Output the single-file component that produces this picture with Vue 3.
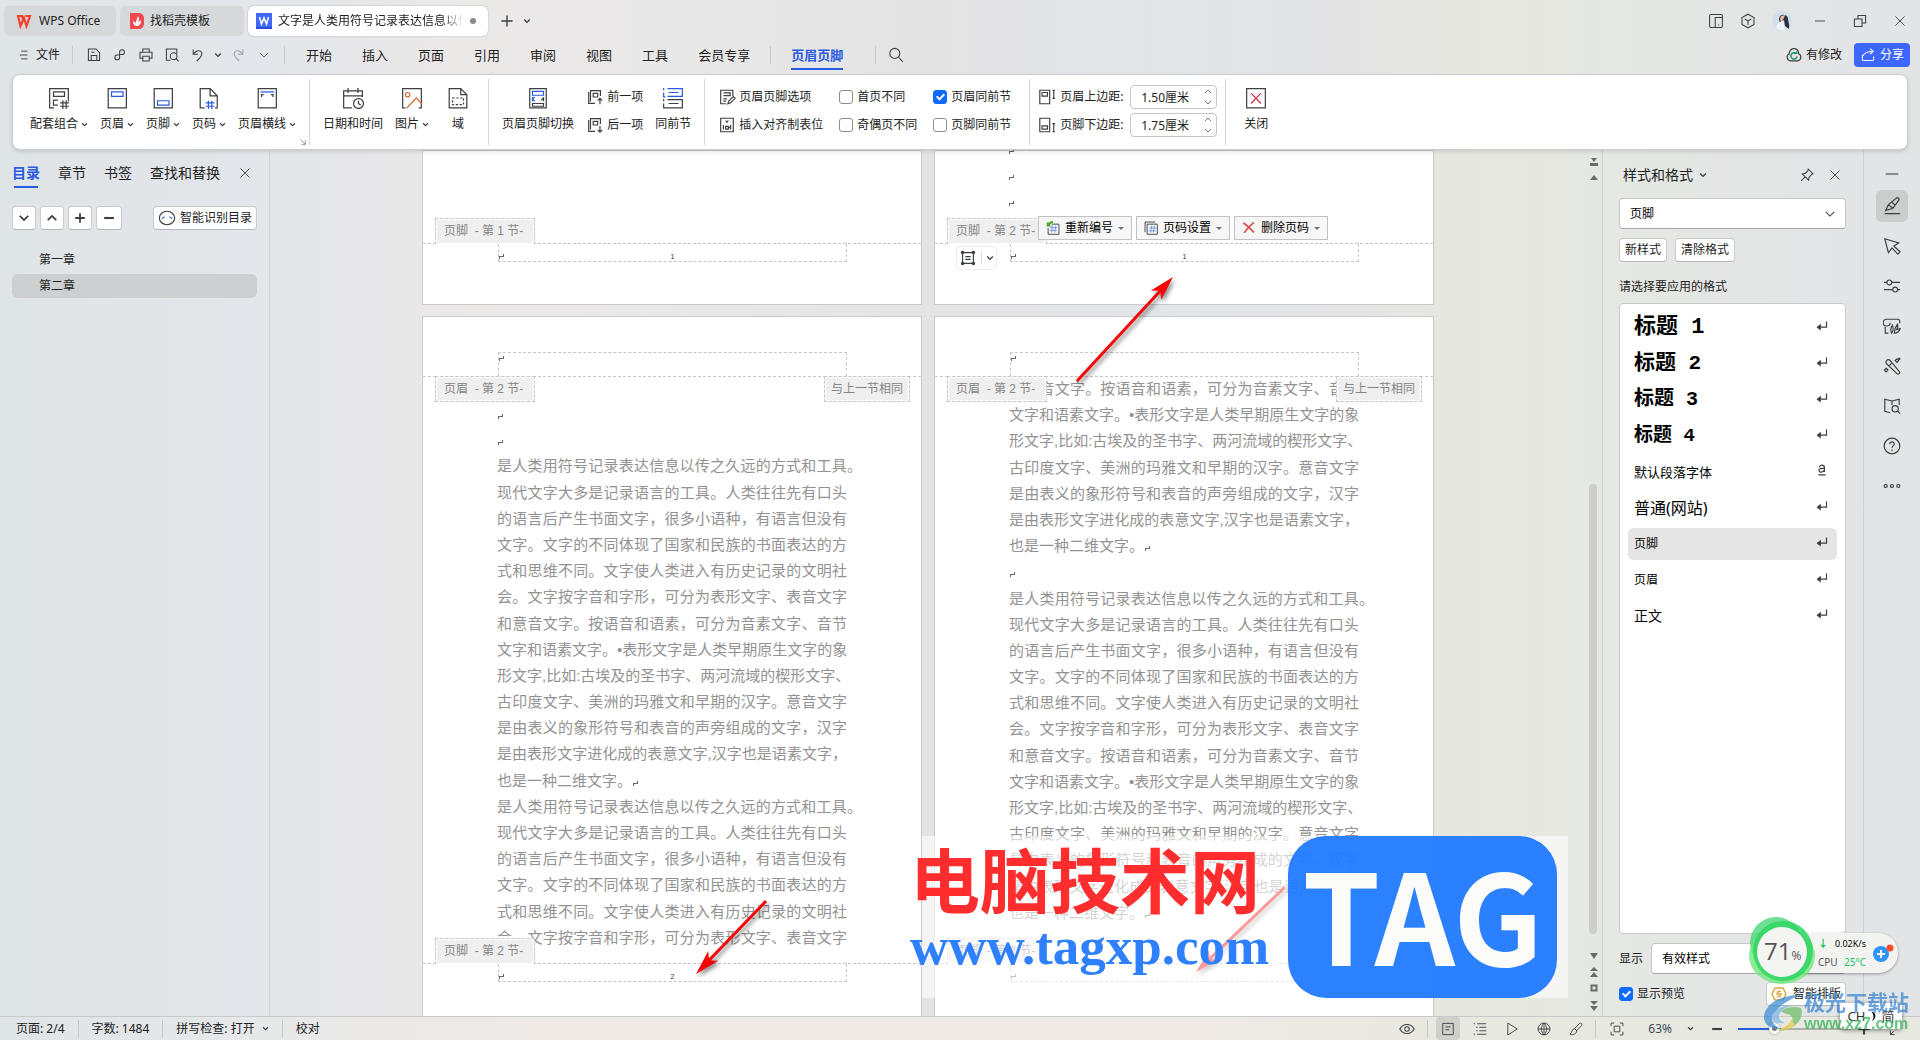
<script setup>
import { ref } from "vue";

const menuTabs = ["开始", "插入", "页面", "引用", "审阅", "视图", "工具", "会员专享"];
const navTabs = ["目录", "章节", "书签", "查找和替换"];
const activeNav = ref("目录");

const chapters = ["第一章", "第二章"];
const activeChapter = ref("第二章");

const headerTools = [
  { label: "配套组合", icon: "combo", more: true },
  { label: "页眉", icon: "header", more: true },
  { label: "页脚", icon: "footer", more: true },
  { label: "页码", icon: "pageNo", more: true },
  { label: "页眉横线", icon: "headerLine", more: true },
];
const insertTools = [
  { label: "日期和时间", icon: "date" },
  { label: "图片", icon: "picture", more: true },
  { label: "域", icon: "field" },
];

const firstDifferent = ref(false);
const oddEvenDifferent = ref(false);
const headerSame = ref(true);
const footerSame = ref(false);
const topMargin = ref("1.50厘米");
const bottomMargin = ref("1.75厘米");
const showPreview = ref(true);
const zoom = ref(30);

const text = [
  "是人类用符号记录表达信息以传之久远的方式和工具。",
  "现代文字大多是记录语言的工具。人类往往先有口头",
  "的语言后产生书面文字，很多小语种，有语言但没有",
  "文字。文字的不同体现了国家和民族的书面表达的方",
  "式和思维不同。文字使人类进入有历史记录的文明社",
  "会。文字按字音和字形，可分为表形文字、表音文字",
  "和意音文字。按语音和语素，可分为音素文字、音节",
  "文字和语素文字。•表形文字是人类早期原生文字的象",
  "形文字,比如:古埃及的圣书字、两河流域的楔形文字、",
  "古印度文字、美洲的玛雅文和早期的汉字。意音文字",
  "是由表义的象形符号和表音的声旁组成的文字，汉字",
  "是由表形文字进化成的表意文字,汉字也是语素文字，",
  "也是一种二维文字。",
];

// An empty string is an empty paragraph: only its mark is drawn.
const pages = [
  { key: "left", lines: ["", "", ...text, ...text.slice(0, 6)] },
  { key: "right", lines: [...text.slice(6), "", ...text] },
];

const hasMark = (line) => line === "" || line === text[12];
const lineClass = (line) => ({ ending: hasMark(line), hanging: line === text[0] });

const pageTools = [
  { label: "重新编号", icon: "renumber" },
  { label: "页码设置", icon: "numberSet" },
  { label: "删除页码", icon: "numberDel" },
];

// start x, start y, tip x, tip y
const pointers = [
  [655, 231, 751, 127],
  [344, 751, 274, 824],
  [863, 737, 774, 822],
];
const pointerLength = (p) => Math.hypot(p[2] - p[0], p[3] - p[1]);
const pointerAngle = (p) => (Math.atan2(p[3] - p[1], p[2] - p[0]) * 180) / Math.PI;

const styles = [
  { name: "标题 1", cls: "h1", mark: "enter" },
  { name: "标题 2", cls: "h2", mark: "enter" },
  { name: "标题 3", cls: "h3", mark: "enter" },
  { name: "标题 4", cls: "h4", mark: "enter" },
  { name: "默认段落字体", cls: "default", mark: "charA" },
  { name: "普通(网站)", cls: "web", mark: "enter" },
  { name: "页脚", cls: "small", mark: "enter" },
  { name: "页眉", cls: "small", mark: "enter" },
  { name: "正文", cls: "body", mark: "enter" },
];
const activeStyle = ref("页脚");

const railIcons = ["pen", "cursor", "sliders", "material", "wand", "book", "help", "dots"];
const viewIcons = ["viewPage", "viewOutline", "play", "globe", "brush"];

// 20x20 glyphs
const icons = {
  menu: '<path d="M6 4.500h9M4 10h11M6 15.500h9"/>',
  save: '<path d="M3 2.500h9.500l4.500 4.500v10H3zM6.500 17v-6.500h7V17M6.500 6.500h4"/>',
  link: '<path d="M9 9.500h3.500a3 3 0 1 0-3-3v6.500a3 3 0 1 1-3-3H9"/>',
  print: '<path d="M6 6.500v-4h8v4M6 14H2.500V6.500h15V14H14M6 11.500h8v6H6z"/>',
  preview: '<path d="M16 8V2.500H3v14h5"/><circle cx="12" cy="11.500" r="4.200"/><path d="M15 14.500l3.500 3.500"/>',
  undo: '<path d="M4 3v6h6M4.500 8.500C8 4 12.500 3.500 14.500 6.500c1.500 2.500 0 5.500-6 11"/>',
  redo: '<path d="M16 3v6h-6M15.500 8.500C12 4 7.500 3.500 5.500 6.500c-1.500 2.500 0 5.500 6 11"/>',
  down: '<path d="M3 6.500l7 7 7-7"/>',
  search: '<circle cx="8.500" cy="8" r="6.300"/><path d="M13 12.500l5.500 6"/>',
  plus: '<path d="M10 2v16M2 10h16"/>',
  minus: '<path d="M3 10h14"/>',
  close: '<path d="M3.500 3.500l13 13M16.500 3.500l-13 13"/>',
  restore: '<path d="M3 7.500h9.500V17H3zM7.500 7V3H17v9.500h-4"/>',
  device: '<rect x="2" y="2" width="16" height="16" rx="1.500"/><path d="M9 18V5.500h8.500M12.500 15h1.500"/>',
  cube: '<path d="M10 1.500l7.500 4.300v8.400L10 18.500l-7.500-4.300V5.800zM6 7.500l4 2.500 4-2.500M10 10v5"/>',
  cloud: '<path d="M7 16.500H6a4 4 0 0 1-1.500-7.500C5 5.500 7 3 10 3s5 2.500 5.500 6a4 4 0 0 1-1.500 7.500H7"/><path stroke="#15935f" stroke-width="1.600" d="M12.500 8.500a3.500 3.500 0 1 0 1 3M10 8h3V6"/>',
  share: '<path d="M3 10v5.500a1.500 1.500 0 0 0 1.500 1.500h11a1.500 1.500 0 0 0 1.500-1.500V12M4 11c1-4 5-5.500 12-5.500M12.500 2l4 3.500-4 3.500"/>',
  combo: '<path d="M5.500 19H1.500V1.500h17V13"/><path d="M5 4.500h10v4H5z"/><path d="M9 12H5v4.500h4M11 14.500h8M11 17.500h8M13.500 12v8M16.500 12v8"/>',
  header: '<path d="M2 1.500h16.500V19H2z"/><path class="blue" d="M5 4.500h10.500v4H5z"/>',
  footer: '<path d="M2 1.500h16.500V19H2z"/><path class="blue" d="M5 12.500h10.500v4H5z"/>',
  pageNo: '<path d="M6 19H2V1.500h9l6.500 6.500v11h-2M11 1.500V8h6.500"/><path class="blue" d="M7 14.500h8M7 17.500h8M9.500 12.500v7.500M12.500 12.500v7.500"/>',
  headerLine: '<path d="M2 1.500h16.500V19H2z"/><path class="blue" d="M4 4.500h12.500"/><path d="M5 9V7h2M15.500 9V7h-2" />',
  date: '<path d="M9 19H1.500V3.500h17V9M1.500 8h17M5.500 1v4.500M14.500 1v4.500"/><circle cx="15" cy="15" r="4.500"/><path d="M15 12.500V15l2 1.500"/>',
  picture: '<path d="M4 19H1.500V1.500h17V19H16"/><circle class="orange" cx="6" cy="7" r="2"/><path class="orange" d="M5 19.500L14 10l5 5.500"/>',
  field: '<path d="M2 19V1.500h10.500L18 7v12zM12.500 1.500V7H18"/><path stroke-dasharray="2 1.500" d="M5 10h10v6H5z"/>',
  swap: '<path d="M2.500 1.500h15V19h-15z"/><path class="blue" d="M5 4h10v3.500H5zM7 9l-2 2 2 2M5 9v4"/><path d="M13 12l2-2v3M5 15h10v2.500H5z"/>',
  prev: '<path d="M3 4.500V17h7M5 15V3h11v6M8 6h5v4H8z" /><path d="M15.500 18v-6M13 14l2.500-2.500L18 14"/>',
  next: '<path d="M3 4.500V17h7M5 15V3h11v6M8 6h5v4H8z" /><path d="M15.500 11v7M13 15.500l2.500 2.500 2.500-2.500"/>',
  same: '<path class="blue" d="M5 1.500h13.500v7H5M1.500 1v2M1.500 5v4h1.500M6 5h9"/><path d="M5 11.500h13.500v7.500H3M1.500 11v2M1.500 15v4h1.500M6 15h9"/>',
  options: '<path d="M9 17.500H3v-15h13.500V9M6 5.500h7.500v3H6M6 12h4M6 14.500h3"/><path d="M11 17.500l1-3 5-5 2 2-5 5z"/>',
  align: '<path d="M3 2.500h14v15H3z"/><path d="M8.500 5l1.500 2 1.500-2M6 10v5M8.500 11.500h3v3h-3zM14 10v5M11.500 13H14"/>',
  marginTop: '<path d="M2 2.500h11v15H2zM4.500 5h6v4h-6z"/><path d="M16 2.500h3M17.500 2.500v9M16 11.500h3"/>',
  marginBottom: '<path d="M2 2.500h11v15H2zM4.500 11h6v3.500h-6z"/><path d="M16 8.500h3M17.500 8.500v9M16 17.500h3"/>',
  closeBox: '<path d="M1.500 1.500h17V19h-17z"/><path stroke="#d2304f" d="M5.500 5.500l9 9.500M14.500 5.500l-9 9.500"/>',
  corner: '<path d="M4 4l11 11M16 6v10H6"/>',
  smart: '<ellipse cx="10" cy="10" rx="8.500" ry="7.500"/><path stroke="#3a6ff0" d="M4.500 11c.5-1.500 1.500-2 3-2M15.500 11c-.5-1.500-1.500-2-3-2"/>',
  pin: '<path d="M11.500 2.500l6 6-2 1-3 3.500-.5 3.500-8-8 3.500-.500 3.500-3zM8 12l-5.500 5.500"/>',
  enter: '<path d="M17.500 2.500v9.500H6"/><path fill="#333" d="M2.500 12L7 8.500v7z"/>',
  charA: '<path d="M5.500 5.500C6 3 8 2 10 2c3 0 4 1.500 4 4v7.500M14 7c-5 0-9 .5-9 3.500C5 14.500 12 14.500 14 10M4 18h12"/>',
  pen: '<path d="M3 15l3-6.500L14.500 1.500a1.800 1.800 0 0 1 2.700 2.500L11 12.500zM6 8.500l5 4M9.500 5.500l4 3.500M2 18.500h17"/>',
  cursor: '<path d="M2 2l15.500 4.500-5.500 3.500 7 6.500-2.500 2.500-6.500-7L6 17.500z"/>',
  sliders: '<circle cx="7" cy="6" r="2.700"/><circle cx="13.500" cy="14" r="2.700"/><path d="M1 6h3.300M9.700 6H19M1 14h9.800M16.200 14H19"/>',
  material: '<path d="M6 18H2.500V11M18.500 7V4.500a2 2 0 0 0-2-2H4A3.500 3.500 0 0 0 4 10c2 0 4-1 4-3.500"/><path d="M9.500 18c-1.500-3-1-6 1-9 1 3 .8 7-1 9zM12.500 18c0-5 2-8 3.500-10 1 3 0 5-1 6l4-1c-1 3-3 5-6.500 5z"/>',
  wand: '<path d="M4 4a2.500 2.500 0 0 1 4 0l10 12a1.700 1.700 0 0 1-2.500 2.500L4 7.500A2.500 2.500 0 0 1 4 4zM7 9.500L10 6.500"/><path d="M15.500 2l2 2-2 2-2-2zM3.500 12.500l2 2-2 2-2-2z"/><circle cx="18" cy="2" r=".8"/>',
  book: '<path d="M10 4.500L2 2.500v13.500l6 1.500M10 4.500l8-2V9M10 4.500V9"/><circle cx="13.500" cy="13" r="3.500"/><path d="M16 15.500l3 3"/>',
  help: '<circle cx="10" cy="10" r="8.700"/><path d="M7.500 8a2.500 2.500 0 1 1 3.500 2.200c-.8.400-1 .8-1 1.800M10 14v1.500"/>',
  dots: '<circle cx="3" cy="10" r="1.700"/><circle cx="10" cy="10" r="1.700"/><circle cx="17" cy="10" r="1.700"/>',
  eye: '<path d="M1 10C5 2.500 15 2.500 19 10 15 17.500 5 17.500 1 10z"/><circle cx="10" cy="10" r="2.800"/>',
  viewPage: '<path d="M2.500 2h15v16h-15zM6.500 7h7M6.500 11h5"/>',
  viewOutline: '<path d="M6 2.500h13M9 7.500h10M9 12.500h10M6 17.500h13M1 2.500h2M4.500 7.500h2M4.500 12.500h2M1 17.500h2"/>',
  play: '<path d="M4 1.500L17.500 10 4 18.500z"/>',
  globe: '<circle cx="10" cy="10" r="8.500"/><path d="M1.500 10h17M10 1.500v17M10 1.500C5 6 5 14 10 18.500M10 1.500c5 4.500 5 12.500 0 17"/>',
  brush: '<path d="M8 9.500l7-7.500c2-1.500 4.500 1 3 3L11 12.500zM8 9.500c-4 0-3 5-6.500 8 4.500 1.500 9 0 9.500-5z"/>',
  fit: '<path d="M1.500 6V1.500H6M14 1.500h4.500V6M18.500 14v4.500H14M6 18.500H1.500V14M6 6h8v8H6z"/>',
  full: '<path d="M12 2h6v6M8 18H2v-6M2 18l5-5M13 2h5"/>',
  layout: '<path d="M4 4h12v12H4zM7 8.500h6M7 11.500h6"/><circle cx="4" cy="4" r="1.300"/><circle cx="16" cy="4" r="1.300"/><circle cx="4" cy="16" r="1.300"/><circle cx="16" cy="16" r="1.300"/>',
  renumber: '<path d="M8 4.500h10.500V19H3V10"/><path class="soft" d="M6 9.500h10M5.500 13.500h10M9.500 6.500l-1.500 10M14 6.500l-1.500 10"/><path fill="#49a824" stroke="none" d="M1 1v7h7L5.500 5.500C7 4 8 3 10 3V0C7 0 4.500 1.500 3 3z"/>',
  numberSet: '<path d="M4.500 4.500H19V19H4.500zM1.500 16V1.500H16"/><path class="soft" d="M7.500 10h10M6.500 14h10M11 6.500l-1.500 10M15 6.500l-1.500 10"/>',
  numberDel: '<path stroke="#d9534f" stroke-width="2.400" d="M2 2.500c5 4 11 9 15 14M17 2C11 7 7 11 3 17"/>',
};
</script>

<template>
  <div class="app">
    <header class="titlebar">
      <button class="doc-tab wps" type="button">
        <svg class="logo" viewBox="0 0 16 14"><path fill="none" stroke="#f4402c" stroke-width="2.200" d="M1 2h5l1.500 5M2 2l2.500 10L8 4l2.500 8L14 2H9.500" /></svg>
        <span>WPS Office</span>
      </button>
      <button class="doc-tab docer" type="button">
        <svg class="logo" viewBox="0 0 16 16"><path fill="#f04a50" d="M1 0h9a5 5 0 0 1 5 5v6a5 5 0 0 1-5 5H1z" /><path fill="#fff" d="M8 13C5 13 4 10.500 4 8l2.500 2L9 3c1.500 2 1 4 0 6l3-2c0 4-1.500 6-4 6z" /></svg>
        <span>找稻壳模板</span>
      </button>
      <button class="doc-tab current" type="button">
        <svg class="logo" viewBox="0 0 16 16"><rect width="16" height="16" rx="1" fill="#3d67ff" /><path fill="#2450d8" d="M0 14h16v2H0z" /><path fill="none" stroke="#fff" stroke-width="1.600" d="M3.500 4l2 7L8 5l2.500 6 2-7" /></svg>
        <span class="doc-name">文字是人类用符号记录表达信息以传</span>
        <i class="dirty"></i>
      </button>
      <button class="plain" type="button" aria-label="新建"><svg class="ic s14 bold" viewBox="0 0 20 20" v-html="icons.plus"></svg></button>
      <button class="plain" type="button" aria-label="标签列表"><svg class="ic s8 bold" viewBox="0 0 20 20" v-html="icons.down"></svg></button>
      <div class="window-tools">
        <svg class="ic s16" viewBox="0 0 20 20" v-html="icons.device"></svg>
        <svg class="ic s16" viewBox="0 0 20 20" v-html="icons.cube"></svg>
        <svg class="avatar" viewBox="0 0 20 20">
          <circle cx="10" cy="10" r="10" fill="#cfdfec" />
          <path fill="#31303a" d="M7 8c0-5 7-6 9-1 0 4 2 7 1 11l-4-3-1-6-3 1-1 2z" />
          <path fill="#e9b9ae" d="M9 5l4-1-1 3-3 4-1-3z" />
          <path fill="#eef3f7" d="M6 12l5-2 2 9c-4 1-8 0-9-3z" />
        </svg>
        <button class="plain" type="button" aria-label="最小化"><svg class="ic s14" viewBox="0 0 20 20" v-html="icons.minus"></svg></button>
        <button class="plain" type="button" aria-label="还原"><svg class="ic s16" viewBox="0 0 20 20" v-html="icons.restore"></svg></button>
        <button class="plain" type="button" aria-label="关闭"><svg class="ic s14" viewBox="0 0 20 20" v-html="icons.close"></svg></button>
      </div>
    </header>

    <nav class="menubar">
      <button class="plain file" type="button"><svg class="ic s14" viewBox="0 0 20 20" v-html="icons.menu"></svg>文件</button>
      <i class="bar"></i>
      <div class="quick">
        <button v-for="name in ['save', 'link', 'print', 'preview', 'undo']" :key="name" class="plain" type="button" :aria-label="name"><svg class="ic s16" viewBox="0 0 20 20" v-html="icons[name]"></svg></button>
        <button class="plain narrow" type="button" aria-label="撤销列表"><svg class="ic s8 bold" viewBox="0 0 20 20" v-html="icons.down"></svg></button>
        <button class="plain faded" type="button" aria-label="redo"><svg class="ic s16" viewBox="0 0 20 20" v-html="icons.redo"></svg></button>
        <button class="plain" type="button" aria-label="更多"><svg class="ic s12" viewBox="0 0 20 20" v-html="icons.down"></svg></button>
      </div>
      <i class="bar"></i>
      <div class="menu-tabs">
        <button v-for="tab in menuTabs" :key="tab" class="plain" type="button">{{ tab }}</button>
      </div>
      <i class="bar"></i>
      <button class="plain menu-active" type="button">页眉页脚</button>
      <i class="bar"></i>
      <button class="plain search" type="button" aria-label="搜索"><svg class="ic s16" viewBox="0 0 20 20" v-html="icons.search"></svg></button>
      <div class="menu-right">
        <button class="plain changed" type="button"><svg class="ic s18" viewBox="0 0 20 20" v-html="icons.cloud"></svg>有修改</button>
        <button class="share" type="button"><svg class="ic s16" viewBox="0 0 20 20" v-html="icons.share"></svg>分享</button>
      </div>
    </nav>

    <section class="ribbon">
      <div class="group first">
        <button v-for="tool in headerTools" :key="tool.label" class="tool" type="button">
          <svg class="ic s22" viewBox="0 0 20 20" v-html="icons[tool.icon]"></svg>
          <span>{{ tool.label }}<svg class="ic s7 bold" viewBox="0 0 20 20" v-html="icons.down"></svg></span>
        </button>
        <svg class="ic s8 launcher" viewBox="0 0 20 20" v-html="icons.corner"></svg>
      </div>
      <div class="group">
        <button v-for="tool in insertTools" :key="tool.label" class="tool" type="button">
          <svg class="ic s22" viewBox="0 0 20 20" v-html="icons[tool.icon]"></svg>
          <span>{{ tool.label }}<svg v-if="tool.more" class="ic s7 bold" viewBox="0 0 20 20" v-html="icons.down"></svg></span>
        </button>
      </div>
      <div class="group">
        <button class="tool" type="button"><svg class="ic s22" viewBox="0 0 20 20" v-html="icons.swap"></svg><span>页眉页脚切换</span></button>
        <div class="stack">
          <button class="line-tool" type="button"><svg class="ic s18" viewBox="0 0 20 20" v-html="icons.prev"></svg>前一项</button>
          <button class="line-tool" type="button"><svg class="ic s18" viewBox="0 0 20 20" v-html="icons.next"></svg>后一项</button>
        </div>
        <button class="tool" type="button"><svg class="ic s22" viewBox="0 0 20 20" v-html="icons.same"></svg><span>同前节</span></button>
      </div>
      <div class="group options">
        <div class="stack">
          <button class="line-tool" type="button"><svg class="ic s18" viewBox="0 0 20 20" v-html="icons.options"></svg>页眉页脚选项</button>
          <button class="line-tool" type="button"><svg class="ic s18" viewBox="0 0 20 20" v-html="icons.align"></svg>插入对齐制表位</button>
        </div>
        <div class="stack">
          <label class="check"><input v-model="firstDifferent" type="checkbox" />首页不同</label>
          <label class="check"><input v-model="oddEvenDifferent" type="checkbox" />奇偶页不同</label>
        </div>
        <div class="stack">
          <label class="check"><input v-model="headerSame" type="checkbox" />页眉同前节</label>
          <label class="check"><input v-model="footerSame" type="checkbox" />页脚同前节</label>
        </div>
      </div>
      <div class="group margins">
        <div class="stack">
          <div class="margin-row">
            <svg class="ic s18" viewBox="0 0 20 20" v-html="icons.marginTop"></svg>
            <label for="top-margin">页眉上边距:</label>
            <span class="spin">
              <input id="top-margin" v-model="topMargin" type="text" />
              <svg class="arrows" viewBox="0 0 8 16"><path d="M1 4l3-3 3 3M1 12l3 3 3-3" /></svg>
            </span>
          </div>
          <div class="margin-row">
            <svg class="ic s18" viewBox="0 0 20 20" v-html="icons.marginBottom"></svg>
            <label for="bottom-margin">页脚下边距:</label>
            <span class="spin">
              <input id="bottom-margin" v-model="bottomMargin" type="text" />
              <svg class="arrows" viewBox="0 0 8 16"><path d="M1 4l3-3 3 3M1 12l3 3 3-3" /></svg>
            </span>
          </div>
        </div>
      </div>
      <div class="group last">
        <button class="tool" type="button"><svg class="ic s22" viewBox="0 0 20 20" v-html="icons.closeBox"></svg><span>关闭</span></button>
      </div>
    </section>

    <main class="workspace">
      <aside class="nav-pane">
        <div class="nav-tabs">
          <button v-for="tab in navTabs" :key="tab" class="plain" :class="{ active: tab === activeNav }" type="button" @click="activeNav = tab">{{ tab }}</button>
          <button class="plain nav-close" type="button" aria-label="关闭"><svg class="ic s14" viewBox="0 0 20 20" v-html="icons.close"></svg></button>
        </div>
        <div class="nav-tools">
          <button class="box" type="button" aria-label="展开"><svg class="ic s12 heavy" viewBox="0 0 20 20" v-html="icons.down"></svg></button>
          <button class="box" type="button" aria-label="收起"><svg class="ic s12 heavy up" viewBox="0 0 20 20" v-html="icons.down"></svg></button>
          <button class="box" type="button" aria-label="提升"><svg class="ic s12 heavy" viewBox="0 0 20 20" v-html="icons.plus"></svg></button>
          <button class="box" type="button" aria-label="降低"><svg class="ic s14 heavy" viewBox="0 0 20 20" v-html="icons.minus"></svg></button>
          <button class="box wide" type="button"><svg class="ic s18" viewBox="0 0 20 20" v-html="icons.smart"></svg>智能识别目录</button>
        </div>
        <ul class="chapters">
          <li v-for="chapter in chapters" :key="chapter" :class="{ active: chapter === activeChapter }" @click="activeChapter = chapter">{{ chapter }}</li>
        </ul>
      </aside>

      <section class="canvas">
        <div class="pages">
          <article class="page">
            <div class="page-body"></div>
            <div class="zone footer-zone">
              <span class="tag above">页脚&nbsp; - 第 1 节-</span>
              <div class="slot"><svg class="mark" viewBox="0 0 5 5"><path d="M4.500 0v2.500H.5V5" /></svg><span>1</span></div>
            </div>
          </article>
          <article class="page">
            <div class="page-body tail">
              <p v-for="n in 3" :key="n"><svg class="mark" viewBox="0 0 5 5"><path d="M4.500 0v2.500H.5V5" /></svg></p>
            </div>
            <div class="zone footer-zone">
              <span class="tag above">页脚&nbsp; - 第 2 节-</span>
              <div class="slot"><svg class="mark" viewBox="0 0 5 5"><path d="M4.500 0v2.500H.5V5" /></svg><span>1</span></div>
              <div class="page-tools">
                <button v-for="tool in pageTools" :key="tool.label" type="button">
                  <svg class="ic s14" viewBox="0 0 20 20" v-html="icons[tool.icon]"></svg>{{ tool.label }}<i class="caret"></i>
                </button>
              </div>
              <button class="layout-btn" type="button" aria-label="布局选项">
                <svg class="ic s18" viewBox="0 0 20 20" v-html="icons.layout"></svg><i></i><svg class="ic s8 bold" viewBox="0 0 20 20" v-html="icons.down"></svg>
              </button>
            </div>
          </article>

          <article v-for="page in pages" :key="page.key" class="page">
            <div class="zone header-zone">
              <span class="tag below">页眉&nbsp; - 第 2 节-</span>
              <span class="tag below same">与上一节相同</span>
              <div class="slot"><svg class="mark" viewBox="0 0 5 5"><path d="M4.500 0v2.500H.5V5" /></svg></div>
            </div>
            <div class="page-body" :class="page.key">
              <div class="lines">
                <p v-for="(line, index) in page.lines" :key="index" :class="lineClass(line)">{{ line }}<svg v-if="hasMark(line)" class="mark" viewBox="0 0 5 5"><path d="M4.500 0v2.500H.5V5" /></svg></p>
              </div>
            </div>
            <div class="zone footer-zone">
              <span class="tag above">页脚&nbsp; - 第 2 节-</span>
              <div class="slot"><svg class="mark" viewBox="0 0 5 5"><path d="M4.500 0v2.500H.5V5" /></svg><span v-if="page.key === 'left'">2</span></div>
            </div>
          </article>

          <svg class="arrows-layer" viewBox="0 0 1012 866" width="1012" height="866">
            <g v-for="(p, i) in pointers" :key="i" :transform="`translate(${p[2]} ${p[3]}) rotate(${pointerAngle(p)})`">
              <path :d="`M${-pointerLength(p)} -1.500L-20 -1.500L-25 -7L0 0L-25 7L-20 1.500L${-pointerLength(p)} 1.500z`" />
            </g>
          </svg>

          <div class="stamp">
            <div class="stamp-text">
              <strong>电脑技术网</strong>
              <em>www.tagxp.com</em>
            </div>
            <div class="stamp-tag">TAG</div>
          </div>
        </div>
        <div class="scroller">
          <svg viewBox="0 0 16 34" class="scroll-top"><path d="M5 8h6l-3 4zM4 13h8v3H4zM4 30h8l-4-5z" /></svg>
          <div class="track"><i></i></div>
          <svg viewBox="0 0 16 66" class="scroll-bottom"><path d="M4 3h8L8 9zM8 17l-4 4h8zM8 22l-4 5h8zM4 51h8l-4 4zM4 56h8l-4 5z" /><path class="hollow" d="M5.500 35.500h5v5h-5z" /></svg>
        </div>
      </section>

      <aside class="style-pane">
        <div class="style-title">
          <h2>样式和格式</h2>
          <svg class="ic s8 bold" viewBox="0 0 20 20" v-html="icons.down"></svg>
          <button class="plain pin" type="button" aria-label="固定"><svg class="ic s16" viewBox="0 0 20 20" v-html="icons.pin"></svg></button>
          <button class="plain" type="button" aria-label="关闭"><svg class="ic s14" viewBox="0 0 20 20" v-html="icons.close"></svg></button>
        </div>
        <div class="drop">
          <select v-model="activeStyle" aria-label="样式"><option v-for="s in styles" :key="s.name">{{ s.name }}</option></select>
          <svg class="ic s12" viewBox="0 0 20 20" v-html="icons.down"></svg>
        </div>
        <div class="style-actions">
          <button class="box" type="button">新样式</button>
          <button class="box" type="button">清除格式</button>
        </div>
        <p class="hint">请选择要应用的格式</p>
        <ul class="style-list">
          <li v-for="s in styles" :key="s.name" :class="{ active: s.name === activeStyle }" @click="activeStyle = s.name">
            <span :class="s.cls">{{ s.name }}</span>
            <svg class="ic s12" viewBox="0 0 20 20" v-html="icons[s.mark]"></svg>
          </li>
        </ul>
        <div class="show-row">
          <label for="show-kind">显示</label>
          <div class="drop"><select id="show-kind"><option>有效样式</option><option>所有样式</option></select></div>
        </div>
        <div class="preview-row">
          <label class="check"><input v-model="showPreview" type="checkbox" />显示预览</label>
          <button class="box smart-layout" type="button">
            <svg viewBox="0 0 16 16"><path fill="none" stroke="#e0a83c" stroke-width="1.500" d="M4 2h8l3 6-3 6H4L1 8zM10 5.500H7L6 8h4l-1 2.500H6" /></svg>智能排版
          </button>
        </div>
      </aside>

      <aside class="rail">
        <svg class="ic s18 rail-min" viewBox="0 0 20 20" v-html="icons.minus"></svg>
        <button v-for="(name, i) in railIcons" :key="name" class="plain" :class="{ active: i === 0 }" type="button" :aria-label="name">
          <svg class="ic s18" viewBox="0 0 20 20" v-html="icons[name]"></svg>
        </button>
      </aside>
    </main>

    <footer class="status">
      <span>页面: 2/4</span><i class="bar"></i>
      <span>字数: 1484</span><i class="bar"></i>
      <span class="spell">拼写检查: 打开<svg class="ic s7 bold" viewBox="0 0 20 20" v-html="icons.down"></svg></span><i class="bar"></i>
      <span>校对</span>
      <div class="status-right">
        <svg class="ic s16 eye" viewBox="0 0 20 20" v-html="icons.eye"></svg><i class="bar"></i>
        <div class="views">
          <button v-for="(name, i) in viewIcons" :key="name" class="plain" :class="{ active: i === 0 }" type="button" :aria-label="name">
            <svg class="ic s14" viewBox="0 0 20 20" v-html="icons[name]"></svg>
          </button>
        </div>
        <i class="bar"></i>
        <svg class="ic s14 fit" viewBox="0 0 20 20" v-html="icons.fit"></svg>
        <span class="percent">63%</span>
        <svg class="ic s7 bold" viewBox="0 0 20 20" v-html="icons.down"></svg>
        <svg class="ic s14 heavy zoom-out" viewBox="0 0 20 20" v-html="icons.minus"></svg>
        <input v-model="zoom" class="zoom" type="range" min="0" max="100" aria-label="缩放" />
        <svg class="ic s14 heavy" viewBox="0 0 20 20" v-html="icons.plus"></svg>
        <svg class="ic s14 full" viewBox="0 0 20 20" v-html="icons.full"></svg>
      </div>
    </footer>

    <div class="monitor">
      <svg class="blob" viewBox="0 0 68 68">
        <circle cx="28" cy="27" r="26" fill="#3fd66f" opacity=".75" />
        <ellipse cx="34" cy="40" rx="33" ry="28" fill="#6fe87c" opacity=".8" />
        <circle cx="35" cy="35" r="30" fill="#2fd562" opacity=".85" />
        <circle cx="34" cy="36" r="25" fill="#f4f4f3" />
      </svg>
      <div class="load">71<small>%</small></div>
      <div class="rates">
        <div><b>↓</b><span>0.02K/s</span></div>
        <div>CPU <em>25°C</em></div>
      </div>
      <svg class="boost" viewBox="0 0 22 20"><circle cx="9" cy="11" r="8" fill="#2f95f7" /><path stroke="#fff" stroke-width="2" d="M9 7v8M5 11h8" /><circle cx="18" cy="5" r="3.500" fill="#f9502f" /></svg>
    </div>

    <div class="ime">CH<svg viewBox="0 0 12 14"><path d="M4 1c6 1 7 9 0 12 3-3 4-8 0-12z" /></svg>简</div>

    <div class="site">
      <svg viewBox="0 0 44 40">
        <path fill="#3f8fd6" d="M42 1C24 0 6 8 4 22c-1 9 8 14 18 13-9-3-12-8-8-15C19 11 30 5 42 1z" />
        <path fill="#7db8e6" d="M12 21C18 13 26 10 34 12c-8 0-13 4-15 9-1 4 2 6 6 8-8 1-15-2-13-8z" />
        <path fill="#6fbf6a" d="M41 14c4 12-8 23-24 23 10-2 18-8 15-14-2-4-9-3-11-6 5-4 14-5 20-3z" />
        <path fill="#e5c94f" d="M31 25c0 5-8 10-16 11 7 1 15 0 20-5z" />
      </svg>
      <div><strong>极光下载站</strong><span>www.xz7.com</span></div>
    </div>
  </div>
</template>

<style>
body {
  margin: 0;
  overflow: hidden;
}
</style>

<style scoped>
.app {
  position: relative;
  display: flex;
  flex-direction: column;
  height: 100vh;
  overflow: hidden;
  color: #222;
  font: 12px/18px "Noto Sans", "Noto Sans CJK SC", sans-serif;
  background: linear-gradient(90deg, #dfe4e7 0, #e3e6ea 14%, #ebe8e8 24%, #e9e8e8 36%, #e5e4e5 48%, #e2e5e9 62%, #e4e4e5 70%, #e7e8df 78%, #e5e8e3 84%, #e4e5e5 91%, #e3e4e6 100%);
}

button,
input,
select {
  font: inherit;
  color: inherit;
}

.plain {
  display: flex;
  align-items: center;
  justify-content: center;
  padding: 0;
  border: 0;
  background: none;
}

.ic {
  flex: none;
  fill: none;
  stroke: #3c3f43;
  stroke-width: 1.3;
}

.ic :deep(.blue) { stroke: #2a5ae0; }
.ic :deep(.orange) { stroke: #dc6a2c; }
.ic :deep(.soft) { stroke: #6f95e8; }
.ic.bold { stroke-width: 3.4; }
.ic.heavy { stroke-width: 3; }
.s7 { width: 7px; height: 7px; }
.s8 { width: 8px; height: 8px; }
.s12 { width: 12px; height: 12px; }
.s14 { width: 14px; height: 14px; }
.s16 { width: 16px; height: 16px; }
.s18 { width: 18px; height: 18px; }
.s22 { width: 22px; height: 22px; }
.ic.s22 { stroke-width: 1.1; }
.ic.s14.bold { stroke-width: 2; }
.up { rotate: 180deg; }

.bar {
  width: 1px;
  height: 18px;
  background: #c6c8cb;
}

/* title bar */
.titlebar {
  display: flex;
  align-items: center;
  flex: none;
  height: 36px;
  padding: 6px 8px 0 4px;
  box-sizing: border-box;
  gap: 4px;
}

.doc-tab {
  display: flex;
  align-items: center;
  gap: 8px;
  box-sizing: border-box;
  height: 30px;
  padding: 0 9px;
  border: 0;
  border-radius: 6px;
  background: #d6d8da;
}

.logo {
  flex: none;
  width: 16px;
  height: 16px;
}

.wps { width: 112px; padding-left: 12px; gap: 7px; white-space: nowrap; }
.docer { width: 124px; gap: 5px; }
.current {
  width: 240px;
  padding: 0 12px 0 8px;
  gap: 6px;
  background: #fff;
  box-shadow: 0 0 2px rgba(0, 0, 0, 0.25);
}

.doc-name {
  width: 186px;
  overflow: hidden;
  white-space: nowrap;
  text-align: left;
  mask-image: linear-gradient(90deg, #000 88%, transparent 100%);
}

.dirty {
  width: 6px;
  height: 6px;
  margin-left: auto;
  border-radius: 50%;
  background: #8c8c8c;
}

.titlebar > .plain { margin-left: 8px; }
.titlebar > .plain + .plain { margin-left: 5px; }

.window-tools {
  display: flex;
  align-items: center;
  gap: 16px;
  margin-left: auto;
}

.window-tools .plain { width: 24px; }
.avatar { width: 20px; height: 20px; }

/* menu bar */
.menubar {
  display: flex;
  align-items: center;
  flex: none;
  height: 38px;
  padding: 0 10px 0 17px;
}

.file { gap: 5px; margin-right: 12px; }
.quick { display: flex; align-items: center; margin: 0 7px 0 8px; }
.quick .plain { width: 26px; height: 24px; }
.quick .narrow { width: 14px; }
.faded { opacity: 0.4; }
.menu-tabs { display: flex; gap: 30px; margin: 0 20px 0 21px; }
.menu-tabs .plain, .menu-active { height: 30px; font-size: 13px; }
.menu-active {
  position: relative;
  margin: 0 32px 0 20px;
  color: #2a5ae0;
  font-weight: bold;
}

.menu-active::after {
  content: "";
  position: absolute;
  left: 0;
  right: 0;
  bottom: 0;
  height: 2px;
  background: #2a5ae0;
}

.search { margin-left: 12px; }
.menu-right { display: flex; align-items: center; gap: 12px; margin-left: auto; }
.changed { gap: 3px; }
.share {
  display: flex;
  align-items: center;
  gap: 4px;
  height: 24px;
  padding: 0 6px;
  border: 0;
  border-radius: 4px;
  color: #fff;
  background: #3d67ff;
}

.share .ic { stroke: #fff; }

/* ribbon */
.ribbon {
  position: relative;
  z-index: 2;
  display: flex;
  flex: none;
  height: 76px;
  margin: 0 12px 0 12px;
  box-sizing: border-box;
  border: 1px solid #cccdce;
  border-radius: 8px;
  background: #fff;
  box-shadow: 0 2px 4px rgba(0, 0, 0, 0.12);
  white-space: nowrap;
}

.group {
  position: relative;
  display: flex;
  gap: 12px;
  margin: 4px 0;
  padding: 6px 13px 0;
  border-right: 1px solid #d4d5d6;
}

.group.first { padding-left: 17px; }
.group.options { gap: 16px; padding-right: 18px; }
.group.margins { padding: 6px 8px 0; }
.group.last { padding: 6px 18px 0; border: 0; }

.tool {
  display: flex;
  flex-direction: column;
  align-items: center;
  gap: 6px;
  height: 52px;
  min-width: 24px;
  padding: 2px 0 0;
  border: 0;
  background: none;
}

.group:nth-child(2) .tool { min-width: 34px; }
.tool span { display: flex; align-items: center; gap: 3px; }

.launcher {
  position: absolute;
  right: 2px;
  bottom: -1px;
}

.stack { display: flex; flex-direction: column; gap: 4px; }

.line-tool {
  display: flex;
  align-items: center;
  gap: 3px;
  height: 24px;
  padding: 0;
  border: 0;
  background: none;
}

.check {
  display: flex;
  align-items: center;
  gap: 4px;
  height: 24px;
}

.check input {
  appearance: none;
  width: 14px;
  height: 14px;
  margin: 0;
  border: 1px solid #8c8e90;
  border-radius: 3px;
  background: #fff;
}

.check input:checked {
  position: relative;
  border-color: #0f6bff;
  background: #0f6bff;
}

.check input:checked::after {
  content: "";
  position: absolute;
  left: 4px;
  top: 1px;
  width: 3px;
  height: 6px;
  border: solid #fff;
  border-width: 0 2px 2px 0;
  rotate: 45deg;
}

.margin-row { display: flex; align-items: center; gap: 4px; height: 24px; }
.margin-row label { width: 66px; }
.spin { position: relative; display: flex; }
.spin input {
  box-sizing: border-box;
  width: 87px;
  height: 24px;
  padding: 0 0 0 10px;
  border: 1px solid #c4c6c8;
  border-radius: 4px;
  background: #fff;
}

.arrows {
  position: absolute;
  right: 5px;
  top: 4px;
  width: 8px;
  height: 16px;
  fill: none;
  stroke: #777;
}

/* workspace */
.workspace {
  display: flex;
  flex: 1;
  min-height: 0;
}

.nav-pane {
  flex: none;
  width: 270px;
  padding: 12px 12px 0;
  box-sizing: border-box;
  border-right: 1px solid #d0d2d4;
}

.nav-tabs { display: flex; gap: 18px; height: 26px; font-size: 14px; }
.nav-tabs .plain { position: relative; height: 22px; }
.nav-tabs .active { color: #2a5ae0; font-weight: bold; }
.nav-tabs .active::after {
  content: "";
  position: absolute;
  left: 2px;
  right: 2px;
  bottom: -4px;
  height: 2px;
  background: #2a5ae0;
}

.nav-close { margin: 0 5px 0 auto; }

.nav-tools { display: flex; gap: 4px; margin-top: 18px; }

.box {
  display: flex;
  align-items: center;
  justify-content: center;
  gap: 4px;
  box-sizing: border-box;
  height: 24px;
  min-width: 24px;
  padding: 0 5px;
  border: 1px solid #c9cbcc;
  border-bottom-color: #b4b6b7;
  border-radius: 4px;
  background: #fff;
  white-space: nowrap;
}

.wide { margin-left: auto; padding: 0 4px; }

.chapters { margin: 18px 0 0; padding: 0; list-style: none; }
.chapters li {
  height: 24px;
  margin-bottom: 2px;
  padding-left: 27px;
  border-radius: 6px;
  line-height: 24px;
}

.chapters .active { background: #cdcfd1; }

/* document */
.canvas {
  display: flex;
  flex: 1;
  min-width: 0;
  overflow: hidden;
}

.pages {
  position: relative;
  display: grid;
  grid-template-columns: 500px 500px;
  grid-template-rows: 155px 1fr;
  gap: 11px 12px;
  margin: 0 auto;
}

.page {
  position: relative;
  display: flex;
  flex-direction: column;
  min-height: 0;
  box-sizing: border-box;
  border: 1px solid #cbcbcb;
  background: #fff;
}

.page:nth-child(n + 3) { border-bottom: 0; }
.page-body { flex: 1; min-height: 0; padding: 0 74px; }
.page-body.left { padding-top: 25px; }
.page-body p { margin: 0; }
.tail { display: flex; flex-direction: column; justify-content: flex-end; padding-bottom: 28px; }
.tail p { height: 26px; line-height: 26px; }

/* the line pitch comes from dividing the text block evenly */
.lines {
  display: flex;
  flex-direction: column;
  justify-content: space-between;
  height: 548px;
  color: #929292;
  font: 15px/24px "Liberation Sans", "Noto Sans CJK SC", sans-serif;
}

.lines p {
  height: 24px;
  text-align-last: justify;
  white-space: nowrap;
}

.lines .ending { text-align-last: left; }
.lines .hanging { margin-right: -15px; }
.lines .mark { margin-left: 1px; }

.mark {
  width: 5px;
  height: 5px;
  fill: none;
  stroke: #666;
  shape-rendering: crispEdges;
}

.zone { position: relative; flex: none; }
.header-zone { height: 60px; box-sizing: border-box; padding: 35px 74px 0 75px; border-bottom: 1px dashed #c6c6c6; }
.footer-zone { height: 53px; box-sizing: border-box; padding: 0 74px 0 75px; border-top: 1px dashed #c6c6c6; }
.page:nth-child(-n + 2) .footer-zone { height: 61px; }

.slot {
  display: flex;
  align-items: flex-end;
  height: 18px;
  box-sizing: border-box;
  border: 1px dashed #c6c6c6;
}

.header-zone .slot { height: 24px; padding-top: 3px; border-bottom: 0; align-items: flex-start; }
.footer-zone .slot { border-top: 0; }
.slot .mark { margin: 0 -5px 2px 0; }
.slot span { margin: 0 auto; color: #333; font: 7px/9px "Liberation Sans", sans-serif; }

.tag {
  position: absolute;
  left: 12px;
  z-index: 1;
  box-sizing: border-box;
  height: 26px;
  min-width: 100px;
  padding: 0 8px;
  border: 1px dashed #c6c6c6;
  background: #efefef;
  box-shadow: inset 0 0 0 1px #fff;
  color: #858585;
  font-family: "Liberation Sans", "Noto Sans CJK SC", sans-serif;
  line-height: 24px;
  white-space: nowrap;
}

.above { bottom: 100%; border-bottom: 0; }
.below { top: 59px; }
.same { left: auto; right: 11px; min-width: 86px; padding: 0 6px; }

.page-tools {
  position: absolute;
  left: 103px;
  top: -28px;
  z-index: 2;
  display: flex;
  gap: 4px;
}

.page-tools button {
  display: flex;
  align-items: center;
  box-sizing: border-box;
  width: 94px;
  height: 24px;
  padding: 0 7px;
  gap: 5px;
  border: 1px solid #c2c2c2;
  background: #f6f6f6;
  color: #000;
  white-space: nowrap;
}

.caret {
  border: 3px solid transparent;
  border-top-color: #6b7280;
  border-bottom: 0;
}

.layout-btn {
  position: absolute;
  left: 21px;
  top: 2px;
  display: flex;
  align-items: center;
  gap: 4px;
  height: 24px;
  padding: 0 2px;
  border: 1px solid #ececec;
  border-radius: 4px;
  background: #fff;
}

.layout-btn i { width: 1px; height: 14px; background: #ddd; }

.arrows-layer {
  position: absolute;
  left: 0;
  top: 0;
  z-index: 3;
  fill: #f60606;
  filter: drop-shadow(2px 3px 2px rgba(0, 0, 0, 0.45));
  pointer-events: none;
}

.stamp {
  position: absolute;
  left: 500px;
  top: 686px;
  z-index: 4;
  display: flex;
  justify-content: flex-end;
  width: 646px;
  height: 162px;
  background: rgba(255, 255, 255, 0.6);
}

.stamp-text {
  position: absolute;
  left: -12px;
  top: 4px;
  display: flex;
  flex-direction: column;
}

.stamp-text strong {
  color: #ff2d2d;
  font: bold 70px/76px "Noto Sans CJK SC", sans-serif;
}

.stamp-text em {
  color: #2f80ff;
  font: normal bold 53px/60px "Liberation Serif", serif;
}

.stamp-tag {
  width: 269px;
  margin-right: 11px;
  border-radius: 38px;
  background: rgba(20, 115, 255, 0.9);
  color: #fbfbfa;
  font: bold 125px/152px "Noto Sans CJK SC", sans-serif;
  text-align: center;
}

.scroller {
  display: flex;
  flex-direction: column;
  flex: none;
  width: 16px;
  fill: #6b6b6b;
}

.scroll-top { width: 16px; height: 34px; }
.scroll-bottom { width: 16px; height: 66px; }
.hollow { fill: none; stroke: #6b6b6b; stroke-width: 2; }
.track { display: flex; flex-direction: column; justify-content: flex-end; flex: 1; padding-bottom: 16px; }
.track i { width: 8px; height: 60%; margin-left: 3px; border-radius: 4px; background: #cdcecd; }

/* style pane */
.style-pane {
  display: flex;
  flex-direction: column;
  flex: none;
  width: 262px;
  padding: 14px 17px 0 16px;
  box-sizing: border-box;
  border-left: 1px solid #cfd1d2;
  border-right: 1px solid #cfd1d2;
}

.style-title { display: flex; align-items: center; height: 22px; padding: 0 4px; }
.style-title h2 { margin: 0 6px 0 0; font-size: 14px; font-weight: normal; }
.pin { margin: 0 13px 0 auto; }

.drop {
  position: relative;
  display: flex;
  align-items: center;
  margin-top: 12px;
}

.drop select {
  appearance: none;
  width: 100%;
  height: 31px;
  padding: 0 10px;
  border: 1px solid #c6c8c9;
  border-bottom-color: #a5a7a8;
  border-radius: 4px;
  background: #fff;
  color: #000;
}

.drop .ic { position: absolute; right: 10px; stroke-width: 1.8; }
.style-actions { display: flex; gap: 8px; margin-top: 9px; }
.hint { margin: 16px 0 7px; }

.style-list {
  flex: 1;
  margin: 0;
  padding: 8px;
  border: 1px solid #c9cacb;
  border-radius: 4px;
  background: #fff;
  list-style: none;
}

.style-list li {
  display: flex;
  align-items: center;
  justify-content: space-between;
  height: 32px;
  margin-bottom: 4px;
  padding: 0 9px 0 6px;
  border-radius: 6px;
  color: #000;
}

.style-list .active { background: #e5e5e5; }
.style-list .ic { margin-bottom: 4px; stroke-width: 2; }
.h1, .h2, .h3, .h4 { font-family: "Liberation Mono", "Noto Sans CJK SC", monospace; font-weight: bold; }
.h1 { font-size: 22px; }
.h2 { font-size: 21px; }
.h3 { font-size: 20px; }
.h4 { font-size: 19px; }
.default { font-size: 13px; }
.web { font-size: 16px; }
.body { font-size: 14px; }

.show-row { display: flex; align-items: center; gap: 8px; margin-top: 9px; }
.show-row .drop { flex: 1; margin: 0; }
.preview-row { display: flex; align-items: center; justify-content: space-between; height: 24px; margin: 8px 0 10px; }
.smart-layout svg { width: 16px; height: 16px; }
.smart-layout { gap: 6px; padding: 0 4px; }

.rail {
  display: flex;
  flex-direction: column;
  align-items: center;
  flex: none;
  width: 56px;
  padding-top: 15px;
  box-sizing: border-box;
}

.rail-min { margin-bottom: 7px; }
.ic.rail-min { stroke: #8c8c8c; stroke-width: 2.4; }
.rail .plain { width: 32px; height: 32px; margin-bottom: 8px; border-radius: 6px; }
.rail .active { background: #cbcdcd; }

/* status bar */
.status {
  display: flex;
  align-items: center;
  gap: 13px;
  flex: none;
  height: 24px;
  padding: 0 17px 0 16px;
  box-sizing: border-box;
  border-top: 1px solid #c8c9c9;
  background: linear-gradient(90deg, #dfe4e7 0, #e6e8e9 12%, #efeae6 28%, #efeae6 63%, #e7e8df 76%, #e7e8df 100%);
}

.spell { display: flex; align-items: center; gap: 7px; }
.status-right { display: flex; align-items: center; margin-left: auto; }
.eye { margin-right: 12px; }
.views { display: flex; gap: 8px; margin: 0 7px 0 8px; }
.views .plain { width: 24px; height: 23px; border-radius: 4px; }
.views .active { background: #cfd0cb; }
.fit { margin: 0 24px 0 14px; }
.percent { margin-right: 15px; color: #444c5c; }
.zoom-out { margin: 0 14px 0 16px; }

.zoom {
  appearance: none;
  width: 113px;
  height: 12px;
  margin: 0 6px 0 0;
  background: linear-gradient(90deg, #2a5ae0 30%, #aeb0ab 30%) center / 100% 2px no-repeat;
}

.zoom::-webkit-slider-thumb {
  appearance: none;
  width: 11px;
  height: 11px;
  border: 3px solid #fff;
  border-radius: 50%;
  background: #777;
  box-shadow: 0 0 2px rgba(0, 0, 0, 0.5);
}

.full { margin-left: 18px; }

/* floating widgets */
.monitor {
  position: absolute;
  right: 22px;
  bottom: 67px;
  z-index: 5;
  display: flex;
  align-items: center;
  gap: 6px;
  box-sizing: border-box;
  width: 120px;
  height: 40px;
  padding: 0 4px 0 40px;
  border-radius: 20px;
  background: #f3f3f2;
  box-shadow: 0 1px 3px rgba(0, 0, 0, 0.35);
}

.blob { position: absolute; left: -30px; top: -17px; width: 68px; height: 68px; }
.load {
  position: absolute;
  left: -14px;
  top: 3px;
  color: #555;
  font: 24px/30px "Open Sans", sans-serif;
}

.load small { font-size: 12px; }
.rates { width: 48px; color: #555; font-size: 10px; line-height: 18px; white-space: nowrap; }
.rates div { display: flex; justify-content: space-between; }
.rates b { color: #18b84a; line-height: 17px; }
.rates span { color: #000; font-size: 9px; }
.rates em { color: #22c55e; font-style: normal; }
.boost { flex: none; width: 22px; height: 20px; }

.ime {
  position: absolute;
  right: 18px;
  bottom: 11px;
  z-index: 6;
  display: flex;
  align-items: center;
  justify-content: center;
  gap: 3px;
  width: 62px;
  height: 26px;
  border-radius: 3px;
  background: #fff;
  box-shadow: 0 1px 4px rgba(0, 0, 0, 0.5);
  color: #333;
  font-size: 13px;
}

.ime svg { width: 10px; height: 13px; }

.site {
  position: absolute;
  right: 11px;
  bottom: 6px;
  z-index: 7;
  display: flex;
  align-items: flex-end;
  opacity: 0.75;
  pointer-events: none;
}

.site svg { width: 44px; height: 40px; }
.site div { display: flex; flex-direction: column; }
.site strong { color: #3b86cf; font-size: 21px; line-height: 24px; }
.site span { color: #35b35a; font: bold 16px/20px "Liberation Sans", sans-serif; }
</style>
